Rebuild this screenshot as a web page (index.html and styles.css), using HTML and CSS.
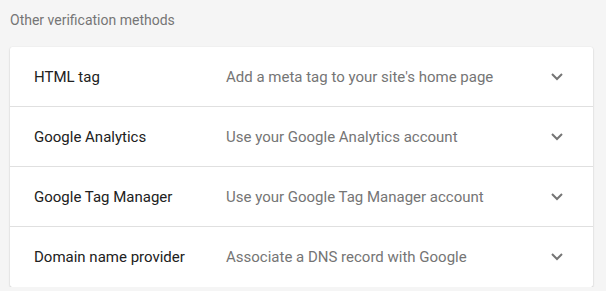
FILE: index.html
```html
<!DOCTYPE html>
<html>
<head>
<meta charset="utf-8">
<link rel="stylesheet" href="styles.css">
</head>
<body>
<div class="page">
  <h2 class="heading">Other verification methods</h2>
  <div class="card">
    <div class="row">
      <div class="title">HTML tag</div>
      <div class="desc">Add a meta tag to your site's home page</div>
      <svg class="chev" width="12" height="8" viewBox="0 0 12 8"><polyline points="1,1 6,6 11,1" fill="none" stroke="#757575" stroke-width="2"/></svg>
    </div>
    <div class="row">
      <div class="title">Google Analytics</div>
      <div class="desc">Use your Google Analytics account</div>
      <svg class="chev" width="12" height="8" viewBox="0 0 12 8"><polyline points="1,1 6,6 11,1" fill="none" stroke="#757575" stroke-width="2"/></svg>
    </div>
    <div class="row">
      <div class="title">Google Tag Manager</div>
      <div class="desc">Use your Google Tag Manager account</div>
      <svg class="chev" width="12" height="8" viewBox="0 0 12 8"><polyline points="1,1 6,6 11,1" fill="none" stroke="#757575" stroke-width="2"/></svg>
    </div>
    <div class="row">
      <div class="title">Domain name provider</div>
      <div class="desc">Associate a DNS record with Google</div>
      <svg class="chev" width="12" height="8" viewBox="0 0 12 8"><polyline points="1,1 6,6 11,1" fill="none" stroke="#757575" stroke-width="2"/></svg>
    </div>
  </div>
</div>
</body>
</html>
```
FILE: styles.css
```css
html, body {
  margin: 0;
  padding: 0;
  background: #f5f5f5;
  font-family: Roboto, "Liberation Sans", sans-serif;
}
.page {
  padding: 12px 13px 0 10px;
}
.heading {
  margin: 0;
  font-size: 14px;
  line-height: 17px;
  font-weight: 400;
  color: #757575;
}
.card {
  margin-top: 18px;
  background: #fff;
  border-radius: 2px;
  box-shadow: 0 1px 2px rgba(0,0,0,0.18), 0 0 1px rgba(0,0,0,0.12);
}
.row {
  display: flex;
  align-items: center;
  height: 59px;
  padding: 0 30px 0 24px;
  border-bottom: 1px solid #e0e0e0;
  font-size: 15px;
}
.row:last-child {
  border-bottom: none;
  height: 60px;
}
.title {
  width: 192px;
  color: #212121;
}
.desc {
  flex: 1;
  color: #757575;
}
.chev {
  display: block;
}
```
